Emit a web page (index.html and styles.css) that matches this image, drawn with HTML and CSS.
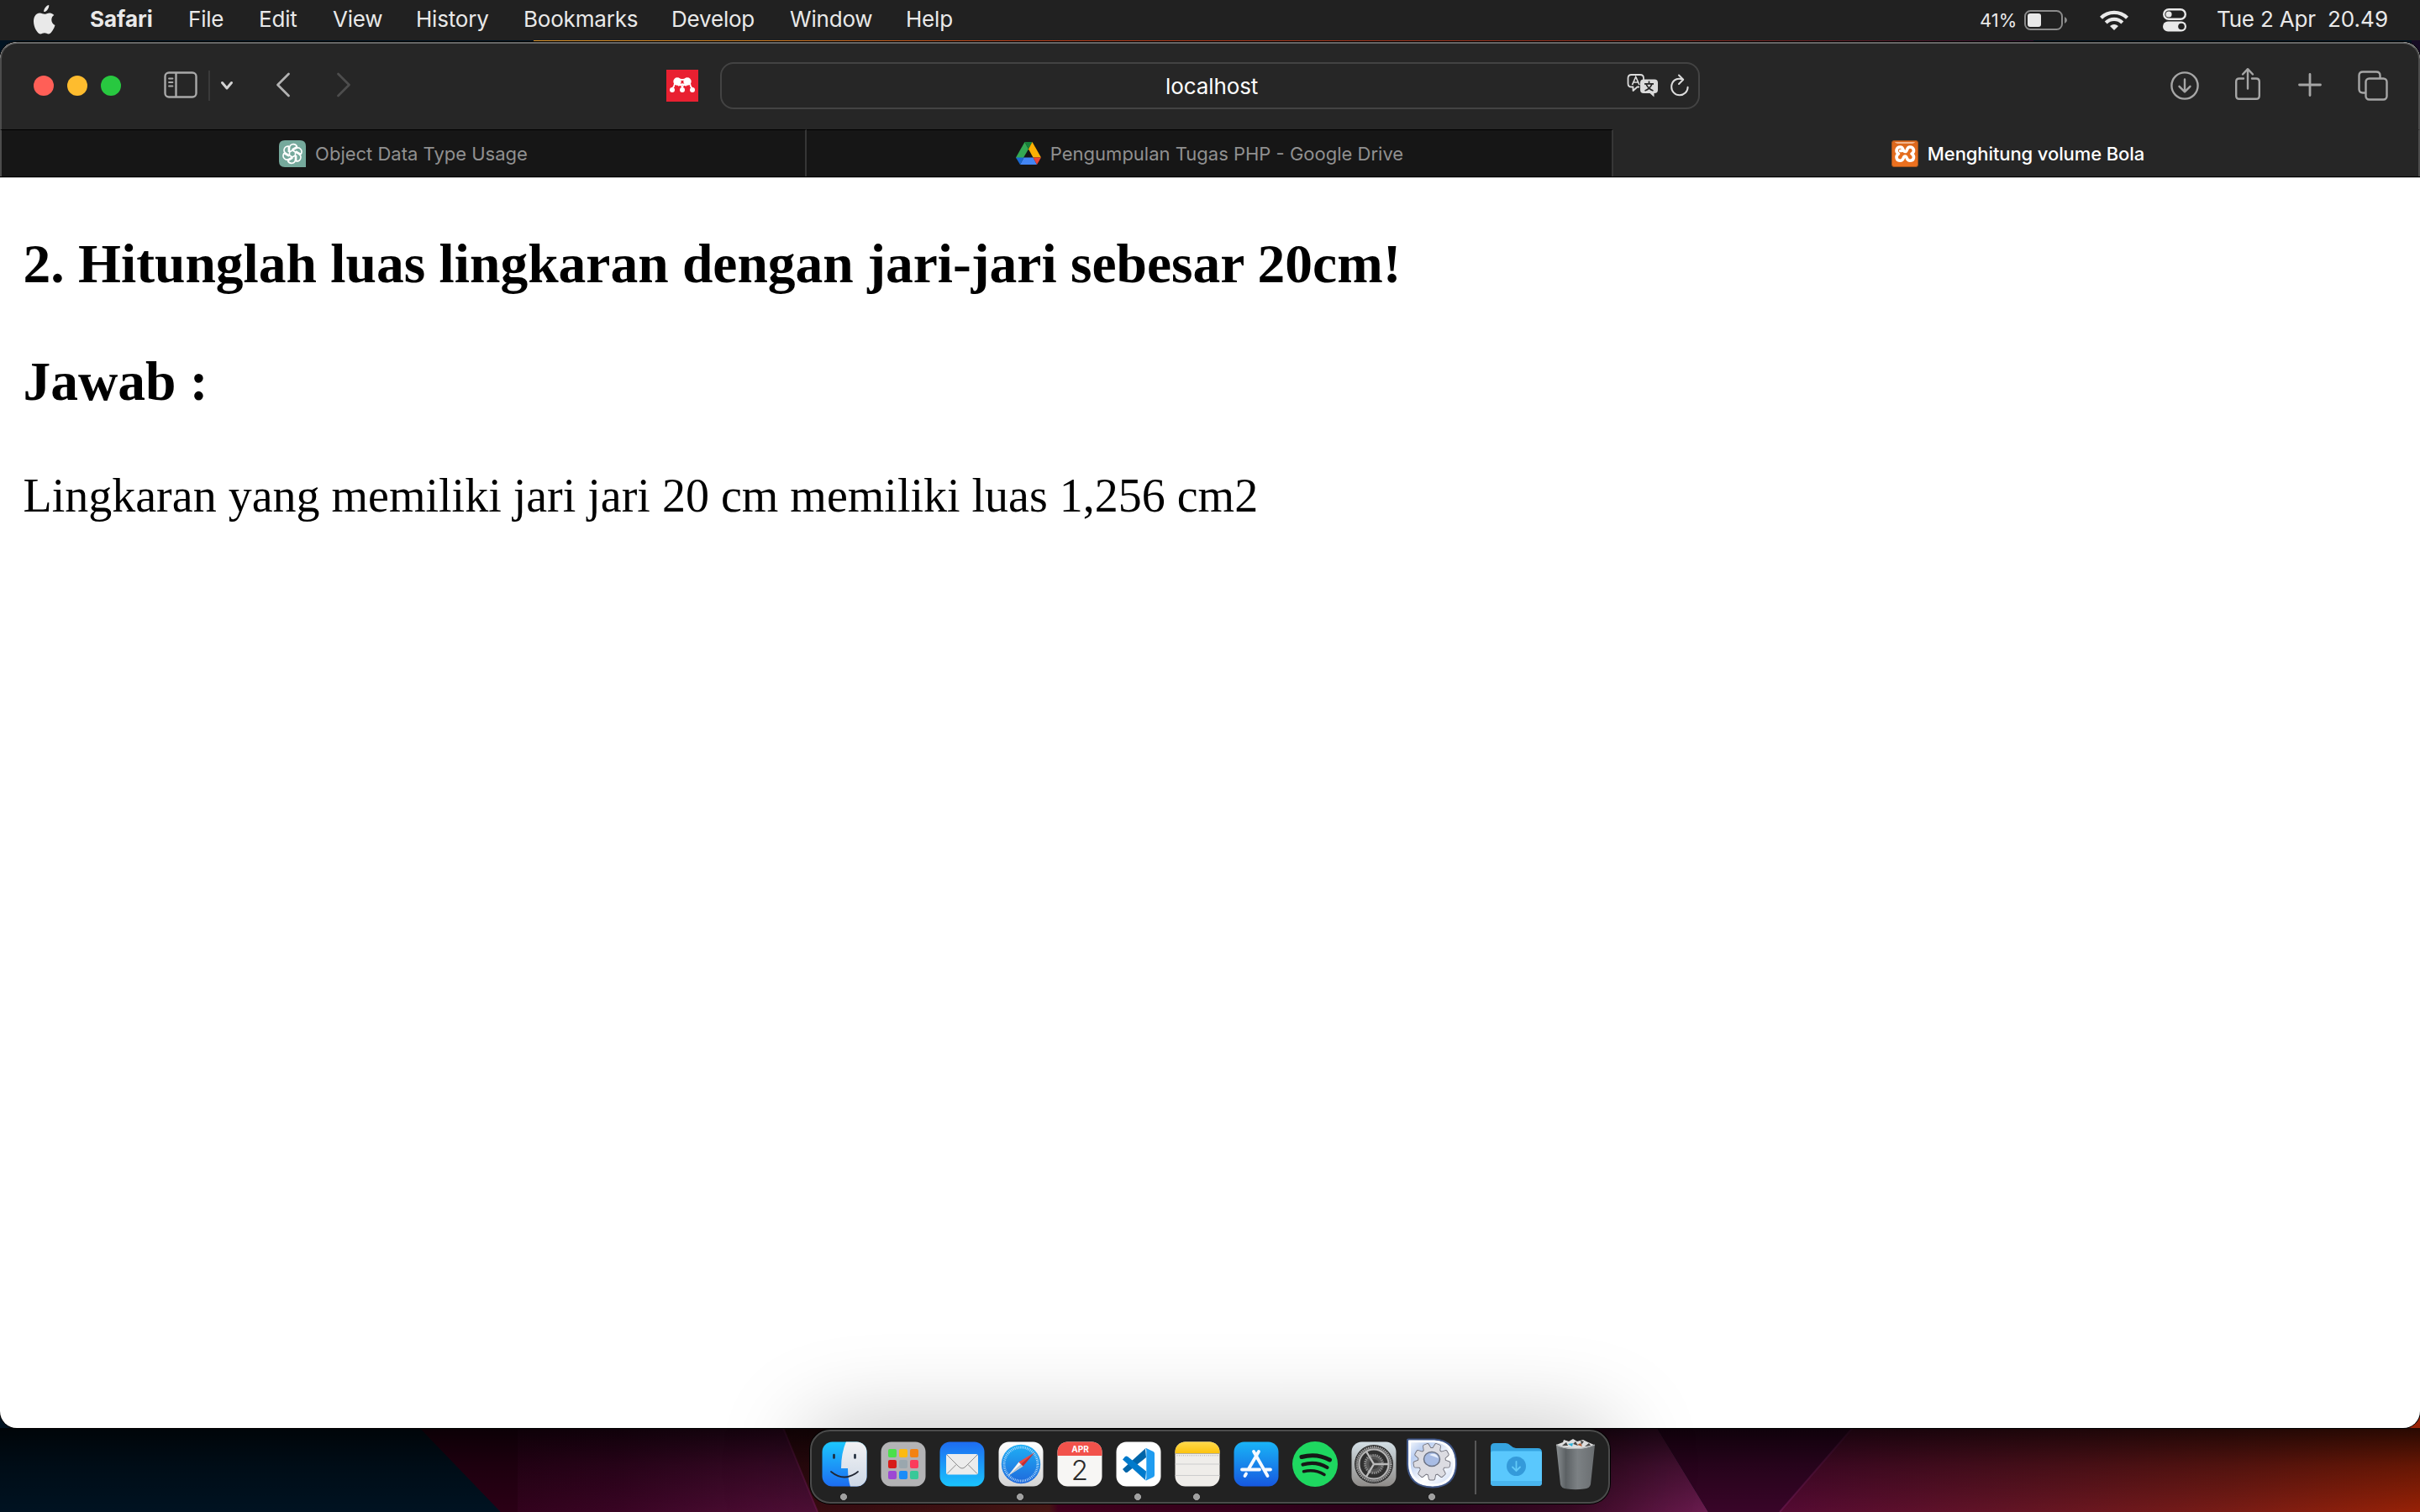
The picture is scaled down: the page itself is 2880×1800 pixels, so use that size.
FILE: index.html
```html
<!DOCTYPE html>
<html lang="id">
<head>
<meta charset="utf-8">
<title>Menghitung volume Bola</title>
<link rel="stylesheet" href="styles.css">
</head>
<body>
<svg class="wallpaper" viewBox="0 0 2880 1800" aria-hidden="true">
  <defs>
    <linearGradient id="wTop" x1="0" x2="1"><stop offset="0" stop-color="#d8922a"/><stop offset=".15" stop-color="#cc7a20"/><stop offset=".32" stop-color="#b63c18"/><stop offset=".75" stop-color="#8a2a1c"/><stop offset="1" stop-color="#2c0c2c"/></linearGradient>
    <linearGradient id="wMag" x1="0" x2="1"><stop offset="0" stop-color="#2c0016"/><stop offset=".5" stop-color="#3a0424"/><stop offset="1" stop-color="#54103a"/></linearGradient>
    <linearGradient id="wMid" x1="0" x2="1"><stop offset="0" stop-color="#3a0b12"/><stop offset=".29" stop-color="#521a18"/><stop offset=".3" stop-color="#4c0022"/><stop offset=".65" stop-color="#33001f"/><stop offset=".85" stop-color="#3f0a28"/><stop offset="1" stop-color="#6c1c50"/></linearGradient>
    <linearGradient id="wRed" x1="0" x2="1"><stop offset="0" stop-color="#560a34"/><stop offset=".35" stop-color="#641426"/><stop offset=".7" stop-color="#7a1c16"/><stop offset="1" stop-color="#9a2206"/></linearGradient>
    <linearGradient id="wShade" x1="0" x2="0" y1="0" y2="1"><stop offset="0" stop-opacity=".74"/><stop offset=".45" stop-opacity=".34"/><stop offset="1" stop-opacity=".02"/></linearGradient>
  </defs>
  <path fill="#001322" d="M0 0h2880v1800H0z"/>
  <path fill="url(#wTop)" d="M635 40H2420V60H635z"/>
  <path fill="#160b24" d="M2870 40h10v60h-10z"/>
  <path fill="url(#wMag)" d="M490 1690L596 1800H980V1690z"/>
  <path fill="#2c0016" d="M500 1700L596 1800h20V1700z"/>
  <path fill="url(#wMid)" d="M928 1690L973 1800H2033L1966 1690z"/>
  <path fill="#3a0529" d="M1966 1690L2033 1800H2118L2214 1690z"/>
  <path fill="url(#wRed)" d="M2214 1690L2118 1800H2880V1660h-30v30z"/>
  <path fill="none" stroke="#7a1c58" stroke-width="2" opacity=".6" d="M930 1695L973 1800M2209 1695L2118 1800"/>
  <path fill="url(#wShade)" d="M0 1700H2880V1800H0z"/>
</svg>

<header class="menubar">
  <nav class="menus">
    <svg class="apple" viewBox="0 0 26 36"><path fill="#e9e9e9" d="M18.200 0C18.500 2 17.600 4.200 16.400 5.700C15.200 7.200 13.600 8.200 12.200 8.100C12 6.100 12.900 4.100 14.100 2.700C15.200 1.200 16.900.2 18.200 0zM24.300 12.100C22.400 13.300 21.300 15.200 21.300 17.800C21.400 20.800 23 22.900 25.500 24.100C25 25.900 24.100 28 22.800 30C21.400 32.200 20 34.300 17.900 34.400C15.900 34.400 15.300 33.200 13 33.200C10.700 33.200 10 34.400 8.100 34.400C6 34.500 4.400 32.200 3 30C.2 25.500-1.200 18.200 1.300 13.500C2.600 11 5 9.500 7.400 9.500C9.600 9.500 11.400 10.800 13 10.800C14.500 10.800 16.800 9.200 19.500 9.400C20.900 9.500 23 10.100 24.300 12.100z"/></svg>
    <b>Safari</b><span>File</span><span>Edit</span><span>View</span><span>History</span><span>Bookmarks</span><span>Develop</span><span>Window</span><span>Help</span>
  </nav>
  <div class="status">
    <span class="percent">41%</span>
    <svg class="battery" width="52" height="24" viewBox="0 0 52 24"><rect x="1" y="1" width="44" height="22" rx="6.500" fill="none" stroke="#8b8b8b" stroke-width="2"/><rect x="4" y="4" width="16" height="16" rx="3" fill="#e9e9e9"/><path fill="#8b8b8b" d="M48 8q3 1.500 3 4t-3 4z"/></svg>
    <svg class="wifi" width="34" height="26" viewBox="0 0 34 26"><g fill="none" stroke="#e9e9e9" stroke-width="4.200"><path d="M1.500 10.200a22 22 0 0 1 31 0"/><path d="M7.200 16a13.800 13.800 0 0 1 19.600 0"/></g><path fill="#e9e9e9" d="M17 25l-5-5q5-4.200 10 0z"/></svg>
    <svg class="control" width="28" height="28" viewBox="0 0 28 28"><rect x="1.200" y="1.200" width="25.600" height="11.600" rx="5.800" fill="none" stroke="#e9e9e9" stroke-width="2.400"/><circle cx="7" cy="7" r="3.600" fill="#e9e9e9"/><rect y="15.500" width="28" height="12" rx="6" fill="#e9e9e9"/><circle cx="22" cy="21.500" r="3.800" fill="#222"/></svg>
    <span class="date">Tue 2 Apr</span><span class="time">20.49</span>
  </div>
</header>

<section class="window">
  <div class="toolbar">
    <div class="tools-left">
      <i class="light red"></i><i class="light yellow"></i><i class="light green"></i>
      <svg class="sidebar" width="40" height="32" viewBox="0 0 40 32"><g fill="none" stroke="#a9a9a9" stroke-width="2.400"><rect x="1.500" y="1.500" width="37" height="29" rx="4.500"/><path d="M14.500 2v28"/><path stroke-width="1.800" stroke-linecap="round" d="M6 8.500h4.500M6 13h4.500M6 17.500h4.500"/></g></svg>
      <i class="divider"></i>
      <svg class="chev" width="16" height="12" viewBox="0 0 16 12"><path fill="none" stroke="#d2d2d2" stroke-width="3" stroke-linecap="round" stroke-linejoin="round" d="M2.500 2.500L8 9l5.500-6.500"/></svg>
      <svg class="back" width="18" height="30" viewBox="0 0 18 30"><path fill="none" stroke="#b2b2b2" stroke-width="2.800" stroke-linecap="round" stroke-linejoin="round" d="M15.500 2L2.500 15l13 13"/></svg>
      <svg class="forward" width="18" height="30" viewBox="0 0 18 30"><path fill="none" stroke="#4d4d4d" stroke-width="2.800" stroke-linecap="round" stroke-linejoin="round" d="M2.500 2l13 13l-13 13"/></svg>
    </div>
    <svg class="mendeley" width="38" height="38" viewBox="0 0 38 38"><path fill="#e92031" d="M0 0h38v38H0z"/><g fill="#fff"><circle cx="13" cy="14" r="4.700"/><circle cx="25" cy="14" r="4.700"/><circle cx="7" cy="24" r="3"/><circle cx="19" cy="24" r="3"/><circle cx="31" cy="24" r="3"/></g><g fill="none" stroke="#fff" stroke-width="1.800"><path d="M10 16q-.5 4-2.500 6M28 16q.5 4 2.500 6M15 17q4 1 4 5.500M23 17q-4 1-4 5.500M14 10.500q5 3 10 0M14 19q5-3.500 10 0"/></g></svg>
    <div class="address">
      <span class="host">localhost</span>
      <svg class="translate" width="38" height="28" viewBox="0 0 38 28"><path fill="none" stroke="#dcdcdc" stroke-width="1.800" stroke-linejoin="round" d="M15 15.500h-2.500l-5 4.500v-4.500H5.500q-4 0-4-4v-6.500q0-4 4-4h10.500q4 0 4 4v2"/><path fill="#dcdcdc" d="M20 6.500h13q4 0 4 4v8.500q0 4-4 4h-.5v4.500l-5-4.500H20q-4 0-4-4v-8.500q0-4 4-4z"/><path fill="none" stroke="#dcdcdc" stroke-width="1.700" d="M6.500 13L10.700 3.500L15 13M8 10h5.500"/><path fill="none" stroke="#262626" stroke-width="1.700" d="M26.500 8.500v3M21 11.800h11M30 12q-2.500 6-8.500 8M23 12q2.500 6 8.500 8"/></svg>
      <svg class="reload" width="22" height="28" viewBox="0 0 22 28"><path fill="none" stroke="#dcdcdc" stroke-width="2" stroke-linecap="round" stroke-linejoin="round" d="M14.500 6.500C6 3.500 1.200 9.500 1.200 15.500a9.700 9.700 0 0 0 19.400.2M10 1.500l5.200 5.200L10 12"/></svg>
    </div>
    <div class="tools-right">
      <svg width="36" height="36" viewBox="0 0 36 36"><g fill="none" stroke="#a6a6a6" stroke-width="2.400" stroke-linecap="round" stroke-linejoin="round"><circle cx="18" cy="18" r="15.600"/><path d="M18 10.500v14.500M11.500 18.800l6.500 6.500l6.500-6.500"/></g></svg>
      <svg class="share" width="32" height="40" viewBox="0 0 32 40"><g fill="none" stroke="#a6a6a6" stroke-width="2.400" stroke-linecap="round" stroke-linejoin="round"><path d="M11 13.500H6q-3.800 0-3.800 3.800v16.700q0 3.800 3.800 3.800h20q3.800 0 3.800-3.800V17.300q0-3.800-3.800-3.800h-5M16 25.500V2.500M10 8.500l6-6.300l6 6.300"/></g></svg>
      <svg class="plus" width="30" height="30" viewBox="0 0 30 30"><path stroke="#a6a6a6" stroke-width="2.800" stroke-linecap="round" d="M15 2.500v25M2.500 15h25"/></svg>
      <svg class="overview" width="36" height="36" viewBox="0 0 36 36"><g fill="none" stroke="#a6a6a6" stroke-width="2.400"><rect x="9.500" y="9.500" width="25" height="25" rx="4"/><path d="M9 26.500H6q-4.500 0-4.500-4.500V6q0-4.500 4.500-4.500h16q4.500 0 4.500 4.500v3"/></g></svg>
    </div>
  </div>
  <div class="tabs">
    <div class="tab">
      <svg width="32" height="32" viewBox="0 0 32 32"><path fill="#75a99c" d="M7 0h18q7 0 7 7v25H7q-7 0-7-7V7q0-7 7-7z"/><g fill="none" stroke="#fff" stroke-width="1.600" stroke-linejoin="round"><path id="petal" d="M12.500 18V9.500C12.500 4 19 3 21.500 7.500L15.500 11"/><use href="#petal" transform="rotate(60 16 16)"/><use href="#petal" transform="rotate(120 16 16)"/><use href="#petal" transform="rotate(180 16 16)"/><use href="#petal" transform="rotate(240 16 16)"/><use href="#petal" transform="rotate(300 16 16)"/></g></svg>
      <span class="t1">Object Data Type Usage</span>
    </div>
    <div class="tab">
      <svg class="drive" width="30" height="28" viewBox="0 0 30 28"><path fill="#34a853" d="M10.500 0L0 18.500l5 7L15 8.500z"/><path fill="#188038" d="M10.500 0h9L15 8.500z"/><path fill="#fbb003" d="M19.500 0L15 8.500l5.500 10H30z"/><path fill="#4285f4" d="M5 27l4.500-8.500h11L25 27z"/><path fill="#1967d2" d="M0 18.500h9.500L5 27z"/><path fill="#ea4335" d="M20.500 18.500H30L25 27z"/></svg>
      <span class="t2">Pengumpulan Tugas PHP - Google Drive</span>
    </div>
    <div class="tab active">
      <svg width="32" height="32" viewBox="0 0 32 32"><defs><linearGradient id="xa" x1="0" x2="0" y1="0" y2="1"><stop offset="0" stop-color="#d9661c"/><stop offset="1" stop-color="#ee7220"/></linearGradient></defs><rect x=".5" y=".5" width="31" height="31" rx="2.500" fill="url(#xa)" stroke="#a3541c"/><path fill="#f2b48b" d="M4 2h24q-1 2-5 2H9Q5 4 4 2z"/><path fill="none" stroke="#fff" stroke-width="3.600" stroke-linecap="round" stroke-linejoin="round" d="M10.500 12.500H12.500M10.500 8C5.500 8 4.500 14 8.500 16C4.500 18.500 5.500 24.300 10.500 24.300C15 24.300 13.500 19 16.200 19S17.500 24.300 22 24.300C27 24.300 28 18.500 24 16C28 14 27 8 22 8C17.500 8 19.500 13.500 16.200 13.500S15 8 10.500 8z"/></svg>
      <span class="t3">Menghitung volume Bola</span>
    </div>
  </div>
  <main class="page">
    <h3>2. Hitunglah luas lingkaran dengan jari-jari sebesar 20cm!</h3>
    <h3>Jawab :</h3>
    <p>Lingkaran yang memiliki jari jari 20 cm memiliki luas 1,256 cm2</p>
  </main>
</section>

<footer class="dock">
  <svg class="open" viewBox="0 0 54 54"><defs><clipPath id="sq"><rect x=".5" y=".5" width="53" height="53" rx="12"/></clipPath><linearGradient id="fb" x1="0" x2="0" y1="0" y2="1"><stop offset="0" stop-color="#1cc8fd"/><stop offset="1" stop-color="#1c6cf2"/></linearGradient><linearGradient id="fw" x1="0" x2="0" y1="0" y2="1"><stop offset="0" stop-color="#f2f2f4"/><stop offset="1" stop-color="#cdd8e6"/></linearGradient></defs><g clip-path="url(#sq)"><path fill="url(#fb)" d="M0 0h54v54H0z"/><path fill="url(#fw)" d="M29 0Q23 14 23 32H31Q31 44 34 54H54V0z"/></g><path fill="none" stroke="#1d2a3a" stroke-width="2.600" stroke-linecap="round" d="M14.500 16v3.500M39.500 16v3.500"/><path fill="none" stroke="#202632" stroke-width="1.800" stroke-linecap="round" d="M11 36Q27 49 43 36"/></svg>
  <svg viewBox="0 0 54 54"><rect x=".5" y=".5" width="53" height="53" rx="12" fill="#b3b3b5"/><g><rect x="9" y="9" width="10" height="10" rx="2" fill="#4be04a"/><rect x="22" y="9" width="10" height="10" rx="2" fill="#fcba12"/><rect x="35" y="9" width="10" height="10" rx="2" fill="#f38212"/><rect x="9" y="22" width="10" height="10" rx="2" fill="#d81c18"/><rect x="22" y="22" width="10" height="10" rx="2" fill="#9aa7ae"/><rect x="35" y="22" width="10" height="10" rx="2" fill="#fb3b5c"/><rect x="9" y="35" width="10" height="10" rx="2" fill="#9d48d4"/><rect x="22" y="35" width="10" height="10" rx="2" fill="#1a8cf8"/><rect x="35" y="35" width="10" height="10" rx="2" fill="#38c898"/></g></svg>
  <svg viewBox="0 0 54 54"><defs><linearGradient id="ml" x1="0" x2="0" y1="0" y2="1"><stop offset="0" stop-color="#1e6cf1"/><stop offset="1" stop-color="#1ac4fd"/></linearGradient></defs><rect x=".5" y=".5" width="53" height="53" rx="12" fill="url(#ml)"/><rect x="8" y="15" width="38" height="24.500" rx="2.500" fill="#ececec"/><path fill="none" stroke="#8d8d8d" stroke-width="1" d="M9 16l14 14q4 4 8 0l14-14M9 38.500l11-11M45 38.500l-11-11"/></svg>
  <svg class="open" viewBox="0 0 54 54"><defs><linearGradient id="sb" x1="0" x2="0" y1="0" y2="1"><stop offset="0" stop-color="#1fb0f5"/><stop offset="1" stop-color="#1f68dc"/></linearGradient><linearGradient id="sw" x1="0" x2="0" y1="0" y2="1"><stop offset="0" stop-color="#fff"/><stop offset="1" stop-color="#d4d4d4"/></linearGradient></defs><rect x=".5" y=".5" width="53" height="53" rx="12" fill="url(#sw)"/><circle cx="27" cy="27" r="23.200" fill="url(#sb)"/><circle cx="27" cy="27" r="20" fill="none" stroke="#c5e4fb" stroke-width="3" stroke-dasharray=".8 1.300"/><path fill="#f5f5f5" d="M11.500 41L24.500 24.500l5 5z"/><path fill="#b9c4cf" d="M11.500 41l15.500-14l2.500 2.500z"/><path fill="#f8453b" d="M43.500 13L24.500 24.500l2.500 2.500z"/><path fill="#cc2c2c" d="M43.500 13L29.500 29.500l-2.500-2.500z"/></svg>
  <svg viewBox="0 0 54 54"><g clip-path="url(#sq)"><path fill="#f7f6f4" d="M0 0h54v54H0z"/><path fill="#f2524b" d="M0 0h54v17H0z"/></g><text x="27.500" y="12.800" text-anchor="middle" font-size="10" font-weight="700" fill="#fff">APR</text><text x="27" y="45.500" text-anchor="middle" font-size="33" font-weight="300" fill="#2b2b2b">2</text></svg>
  <svg class="open" viewBox="0 0 54 54"><rect x=".5" y=".5" width="53" height="53" rx="12" fill="#fff"/><path fill="#0065a9" d="M35 8.500L8 33l3 3.500q1.500 1 3 0L36 19z"/><path fill="#007acc" d="M35 46L8 21.500l3-3.500q1.500-1 3 0L36 35.500z"/><path fill="#1f9cf0" d="M35 8.500q1-.8 2 0l7.500 3.500q1.500.8 1.500 2.500v25.500q0 1.700-1.500 2.500L37 46q-1 .8-2 0q1.300-.7 1.300-2.500V11Q36.300 9.200 35 8.500z"/></svg>
  <svg class="open" viewBox="0 0 54 54"><defs><linearGradient id="nt" x1="0" x2="0" y1="0" y2="1"><stop offset="0" stop-color="#ffda4e"/><stop offset="1" stop-color="#fdc30e"/></linearGradient></defs><g clip-path="url(#sq)"><path fill="#efedea" d="M0 0h54v54H0z"/><path fill="url(#nt)" d="M0 0h54v14H0z"/><path stroke="#b3aea0" d="M0 14.500h54"/><path stroke="#a9a9a9" stroke-dasharray="1 1.500" d="M0 16.800h54"/><path stroke="#cdcdcd" d="M0 27h54M0 40.500h54"/></g></svg>
  <svg viewBox="0 0 54 54"><defs><linearGradient id="as" x1="0" x2="0" y1="0" y2="1"><stop offset="0" stop-color="#19b4f6"/><stop offset="1" stop-color="#1658e0"/></linearGradient></defs><rect x=".5" y=".5" width="53" height="53" rx="12" fill="url(#as)"/><path fill="none" stroke="#f6faff" stroke-width="3.800" stroke-linecap="round" d="M30 12L17.500 33.500M15 38.500l-1.500 2.500M24 12l16.500 29M10 33.500h21M38 33.500h6"/></svg>
  <svg viewBox="0 0 54 54"><circle cx="27" cy="27" r="27" fill="#1ed760"/><g fill="none" stroke="#171717" stroke-linecap="round"><path stroke-width="5" d="M11 18.500Q29 13.500 44.500 22"/><path stroke-width="4.200" d="M12.500 27.500Q28 23 41.500 31"/><path stroke-width="3.500" d="M13.500 35.800Q26.500 32.500 38 39.500"/></g></svg>
  <svg viewBox="0 0 54 54"><defs><linearGradient id="st" x1="0" x2="0" y1="0" y2="1"><stop offset="0" stop-color="#d3dfe5"/><stop offset="1" stop-color="#8e8b88"/></linearGradient></defs><rect x=".5" y=".5" width="53" height="53" rx="12" fill="url(#st)"/><circle cx="27" cy="27" r="23" fill="#2e2e2e"/><circle cx="27" cy="27" r="20.500" fill="#6a6a6a" stroke="#a9a9a9" stroke-width="2.400" stroke-dasharray="1.200 1.200"/><circle cx="27" cy="27" r="17.500" fill="#303030" stroke="#b7b7b7" stroke-width="2"/><circle cx="27" cy="27" r="10.500" fill="#555" stroke="#8d8d8d" stroke-width="3" stroke-dasharray="1.500 1"/><circle cx="27" cy="27" r="6" fill="#3e3e3e"/><path stroke="#bcbcbc" stroke-width="2.400" d="M27 27h17.500M27 27L18 12M27 27L18 42"/></svg>
  <svg class="open prefs" viewBox="0 0 60 60"><defs><linearGradient id="gb" x1="0" x2="1" y1="0" y2="1"><stop offset="0" stop-color="#fff"/><stop offset=".25" stop-color="#b9cdf0"/><stop offset=".6" stop-color="#fff"/><stop offset="1" stop-color="#c3d4f3"/></linearGradient><path id="tooth" d="M25.500 14L26.800 7.500q.2-1 1.200-1h4q1 0 1.200 1L34.500 14z"/><g id="teeth"><use href="#tooth" transform="rotate(20 30 28)"/><use href="#tooth" transform="rotate(60 30 28)"/><use href="#tooth" transform="rotate(100 30 28)"/><use href="#tooth" transform="rotate(140 30 28)"/><use href="#tooth" transform="rotate(180 30 28)"/><use href="#tooth" transform="rotate(220 30 28)"/><use href="#tooth" transform="rotate(260 30 28)"/><use href="#tooth" transform="rotate(300 30 28)"/><use href="#tooth" transform="rotate(340 30 28)"/></g></defs><path fill="url(#gb)" stroke="#3f5585" stroke-width="2" d="M2 1.500H33Q59 3 59 31Q58 58 31 58.500Q2 58 1 31V2z"/><path fill="none" stroke="#fff" stroke-width="2.500" d="M4 4H33Q56 5 56.500 31Q56 55 31 56Q4 55 3.500 31z"/><g fill="#74747e" stroke="#74747e" stroke-width="1.800"><use href="#teeth"/><circle cx="30" cy="28" r="16"/></g><g fill="#dcdce2"><use href="#teeth"/><circle cx="30" cy="28" r="16"/></g><ellipse cx="30" cy="25" rx="9.500" ry="8.500" fill="#a8bce4" stroke="#6b7385" stroke-width="1.500"/><path fill="#e8effc" d="M27 20q8-4 11 4q-5-2-11-4z"/></svg>
  <i class="separator"></i>
  <svg class="folder" viewBox="0 0 61 52"><path fill="#36a4e0" d="M0 5q0-5 5-5h13q3 0 6 3t6 3h26q5 0 5 5v10H0z"/><path fill="#5ac8fd" d="M0 12q0-2.500 2.500-2.500h56q2.500 0 2.500 2.500v35q0 4-4 4H4q-4 0-4-4z"/><path fill="#49b5ee" d="M0 45h61v2q0 4-4 4H4q-4 0-4-4z"/><circle cx="30.500" cy="27.500" r="11.500" fill="#349ada"/><path fill="none" stroke="#62caf8" stroke-width="1.800" stroke-linecap="round" d="M30.500 22v11M26 28.500l4.500 4.500l4.500-4.500"/></svg>
  <svg class="trash" viewBox="0 0 48 62"><defs><linearGradient id="tr" x1="0" x2="1"><stop offset="0" stop-color="#8a8f92"/><stop offset=".25" stop-color="#5c6164"/><stop offset=".55" stop-color="#7c8184"/><stop offset="1" stop-color="#6a6e71"/></linearGradient></defs><path fill="url(#tr)" d="M1 8q23 8 46 0l-5 47q-1 5-8 5.500q-10 1.500-20 0q-7-.5-8-5.500z"/><path fill="#dedede" d="M1 8l8-3l1-3l6 2l5-3l5 3l7-2l6 3l7 3q-8 5-23 5Q7 13 1 8z"/><path fill="#454545" d="M8 9l5-4l2 4zM21 7l3-3l3 5zM30 3l4 1l-3 4zM35 10l5-4l2 3z"/><path fill="#2bb3dc" d="M15 7l6-1l-1 4z"/><path fill="#b55c30" d="M26 8l4-2l2 4z"/><path fill="none" stroke="#b0b4b6" stroke-width="1.200" d="M1 8q23 9 46 0"/></svg>
</footer>
</body>
</html>
```
FILE: styles.css
```css
* { box-sizing: border-box; }
html { background: #001322; }
body {
  margin: 0;
  position: relative;
  width: 2880px;
  height: 1800px;
  overflow: hidden;
  display: flex;
  flex-direction: column;
  font-family: Inter, "Liberation Sans", sans-serif;
}
svg { display: block; flex: none; }
.wallpaper { position: absolute; inset: 0; width: 2880px; height: 1800px; z-index: -1; }

.menubar {
  height: 48px;
  flex: none;
  display: flex;
  justify-content: space-between;
  background: #212121;
  color: #e9e9e9;
  font-size: 26px;
  line-height: 46px;
  white-space: pre;
}
.menus {
  display: grid;
  grid-template-columns: 67px 117px 84px 88px 99px 128px 176px 141px 138px 80px;
  padding-left: 40px;
  letter-spacing: -.2px;
}
.menus b { letter-spacing: 0; }
.apple { width: 26px; height: 36px; margin-top: 6px; }
.status { display: flex; align-items: flex-start; }
.percent { width: 54px; font-size: 22px; line-height: 48px; padding-left: 1px; }
.battery { margin: 12px 38px 0 0; }
.wifi { margin: 11px 41px 0 0; }
.control { margin: 10px 36px 0 0; }
.date { width: 132px; letter-spacing: -.2px; }
.time { width: 110px; }

.window {
  height: 1650px;
  margin-top: 2px;
  flex: none;
  display: flex;
  flex-direction: column;
  overflow: hidden;
  border-radius: 20px;
  background: #fff;
  box-shadow: 0 0 0 1px #000;
}
.toolbar {
  height: 104px;
  flex: none;
  display: flex;
  justify-content: space-between;
  background: #262626;
  border-top: 2px solid #666;
  border-left: 2px solid #4c4c4c;
  border-right: 2px solid #4c4c4c;
  border-radius: 20px 20px 0 0;
}
.tools-left { display: flex; align-items: center; width: 791px; padding-left: 38px; padding-bottom: 2px; }
.light { width: 24px; height: 24px; margin-right: 16px; border-radius: 50%; }
.red { background: #ff5f57; }
.yellow { background: #febc2e; }
.green { background: #28c840; }
.sidebar { margin: -2px 13px 0 35px; }
.divider { width: 2px; height: 36px; background: #3a3a3a; margin-right: 12px; }
.chev { margin-right: 50px; }
.back { margin-right: 54px; margin-top: -2px; }
.forward { margin-top: -2px; }
.mendeley { margin-top: 31px; }
.address {
  width: 1166px;
  height: 56px;
  margin: 22px 0 0 26px;
  display: flex;
  align-items: center;
  border: 2px solid #434343;
  border-radius: 16px;
}
.host { width: 549px; margin-left: 528px; color: #fff; font-size: 26px; letter-spacing: -.1px; }
.translate { margin-right: 14px; }
.tools-right { display: flex; align-items: center; margin-left: auto; padding: 0 36px 3px 0; }
.share { margin: -4px 43px 0 41px; }
.plus { margin-right: 42px; margin-top: -1px; }

.tabs {
  height: 57px;
  flex: none;
  display: grid;
  grid-template-columns: 960px 960px 960px;
  border-bottom: 1px solid #000;
  box-shadow: 0 1px 0 #c4c4c4;
  background: #262626;
}
.tab {
  display: flex;
  align-items: center;
  justify-content: center;
  gap: 11px;
  padding: 0 0 0 1px;
  border-top: 1px solid #000;
  border-right: 2px solid #363636;
  background: #161616;
  color: #909090;
  font-size: 22px;
  white-space: nowrap;
}
.tab:first-child { border-left: 2px solid #4c4c4c; padding-left: 0; }
.tab.active {
  padding-left: 5px;
  border-color: #262626;
  border-right-color: #4c4c4c;
  background: #262626;
  color: #fff;
  font-weight: 500;
  letter-spacing: -.1px;
}

.page { padding: 0 27.5px; font: 56px "Liberation Serif", "Times New Roman", serif; color: #000; }
.page h3 { margin: 65.52px 0; font-size: 65.52px; line-height: 75px; }
.page p { margin: 56px 0; }

.dock {
  width: 952px;
  height: 88px;
  flex: none;
  margin: 2px auto 0;
  padding: 12px 0 0 12px;
  display: flex;
  align-items: flex-start;
  gap: 16px;
  position: relative;
  background: #222;
  border: 2px solid #4b4b4b;
  border-radius: 24px;
  box-shadow: 0 0 0 1px #000, 0 0 110px rgba(0, 0, 0, .27);
}
.dock svg { width: 54px; height: 54px; overflow: visible; }
.dock .open { height: 73px; padding-bottom: 19px; background: radial-gradient(circle at 26px 66px, #a0a0a0 3.700px, transparent 4.300px); }
.dock .prefs { width: 60px; height: 77px; margin: -4px 0 0 -4px; padding-bottom: 17px; background-position: 4px 4px; background-repeat: no-repeat; }
.separator { width: 2px; height: 64px; margin: -1px 1px 0 5px; background: #575757; }
.dock .folder { width: 61px; height: 52px; margin-top: 2px; }
.dock .trash { width: 48px; height: 62px; margin-top: -4px; }
```
